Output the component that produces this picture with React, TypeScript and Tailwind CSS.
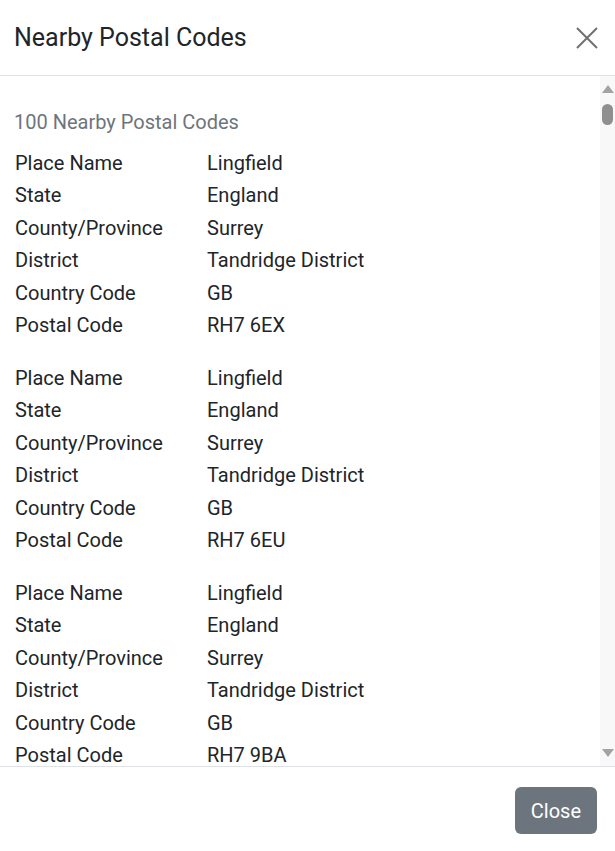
import React from 'react';

type Place = {
  place: string;
  state: string;
  county: string;
  district: string;
  country: string;
  postal: string;
};

const PLACES: Place[] = [
  { place: 'Lingfield', state: 'England', county: 'Surrey', district: 'Tandridge District', country: 'GB', postal: 'RH7 6EX' },
  { place: 'Lingfield', state: 'England', county: 'Surrey', district: 'Tandridge District', country: 'GB', postal: 'RH7 6EU' },
  { place: 'Lingfield', state: 'England', county: 'Surrey', district: 'Tandridge District', country: 'GB', postal: 'RH7 9BA' },
];

function Row({ label, value }: { label: string; value: string }) {
  return (
    <div className="flex">
      <div className="w-[192px] shrink-0">{label}</div>
      <div>{value}</div>
    </div>
  );
}

function Scrollbar() {
  return (
    <div className="w-[15px] shrink-0 bg-[#f8f8f8] flex flex-col items-center pt-[9px] pb-[9px]">
      <svg width="12" height="8" viewBox="0 0 12 8" className="shrink-0">
        <path d="M6 0L12 8H0z" fill="#a3a3a3" />
      </svg>
      <div className="mt-[11px] w-[11px] h-[21px] rounded-full bg-[#8f8f8f]" />
      <div className="flex-1" />
      <svg width="12" height="8" viewBox="0 0 12 8" className="shrink-0">
        <path d="M0 0H12L6 8z" fill="#a3a3a3" />
      </svg>
    </div>
  );
}

export default function App() {
  return (
    <div
      className="h-screen flex flex-col bg-white text-[#212529]"
      style={{ fontFamily: 'Roboto, "Liberation Sans", sans-serif' }}
    >
      {/* Header */}
      <div className="h-[76px] shrink-0 flex items-center justify-between pl-[14px] pr-[17px] border-b border-[#dee2e6]">
        <h5 className="text-[25px] leading-none font-normal">Nearby Postal Codes</h5>
        <button className="w-[22px] h-[22px] flex items-center justify-center text-[#707070]">
          <svg width="22" height="22" viewBox="0 0 22 22" fill="none" stroke="currentColor" strokeWidth={2}>
            <path d="M1 1l20 20M21 1L1 21" />
          </svg>
        </button>
      </div>

      {/* Body */}
      <div className="flex-1 min-h-0 flex">
        <div className="flex-1 min-w-0 overflow-hidden pl-[15px] text-[20px] leading-[32.5px]">
          <div className="pt-[30px]">
            <p className="text-[#6c757d] -ml-px mb-[8px]">100 Nearby Postal Codes</p>
            <div className="flex flex-col gap-[20px]">
              {PLACES.map((p, i) => (
                <div key={i}>
                  <Row label="Place Name" value={p.place} />
                  <Row label="State" value={p.state} />
                  <Row label="County/Province" value={p.county} />
                  <Row label="District" value={p.district} />
                  <Row label="Country Code" value={p.country} />
                  <Row label="Postal Code" value={p.postal} />
                </div>
              ))}
            </div>
          </div>
        </div>
        <Scrollbar />
      </div>

      {/* Footer */}
      <div className="h-[85px] shrink-0 flex items-start justify-end pt-[20px] pr-[18px] border-t border-[#dee2e6]">
        <button className="h-[47px] px-[16px] rounded-[6px] bg-[#6c757d] text-white text-[20px]">
          Close
        </button>
      </div>
    </div>
  );
}
